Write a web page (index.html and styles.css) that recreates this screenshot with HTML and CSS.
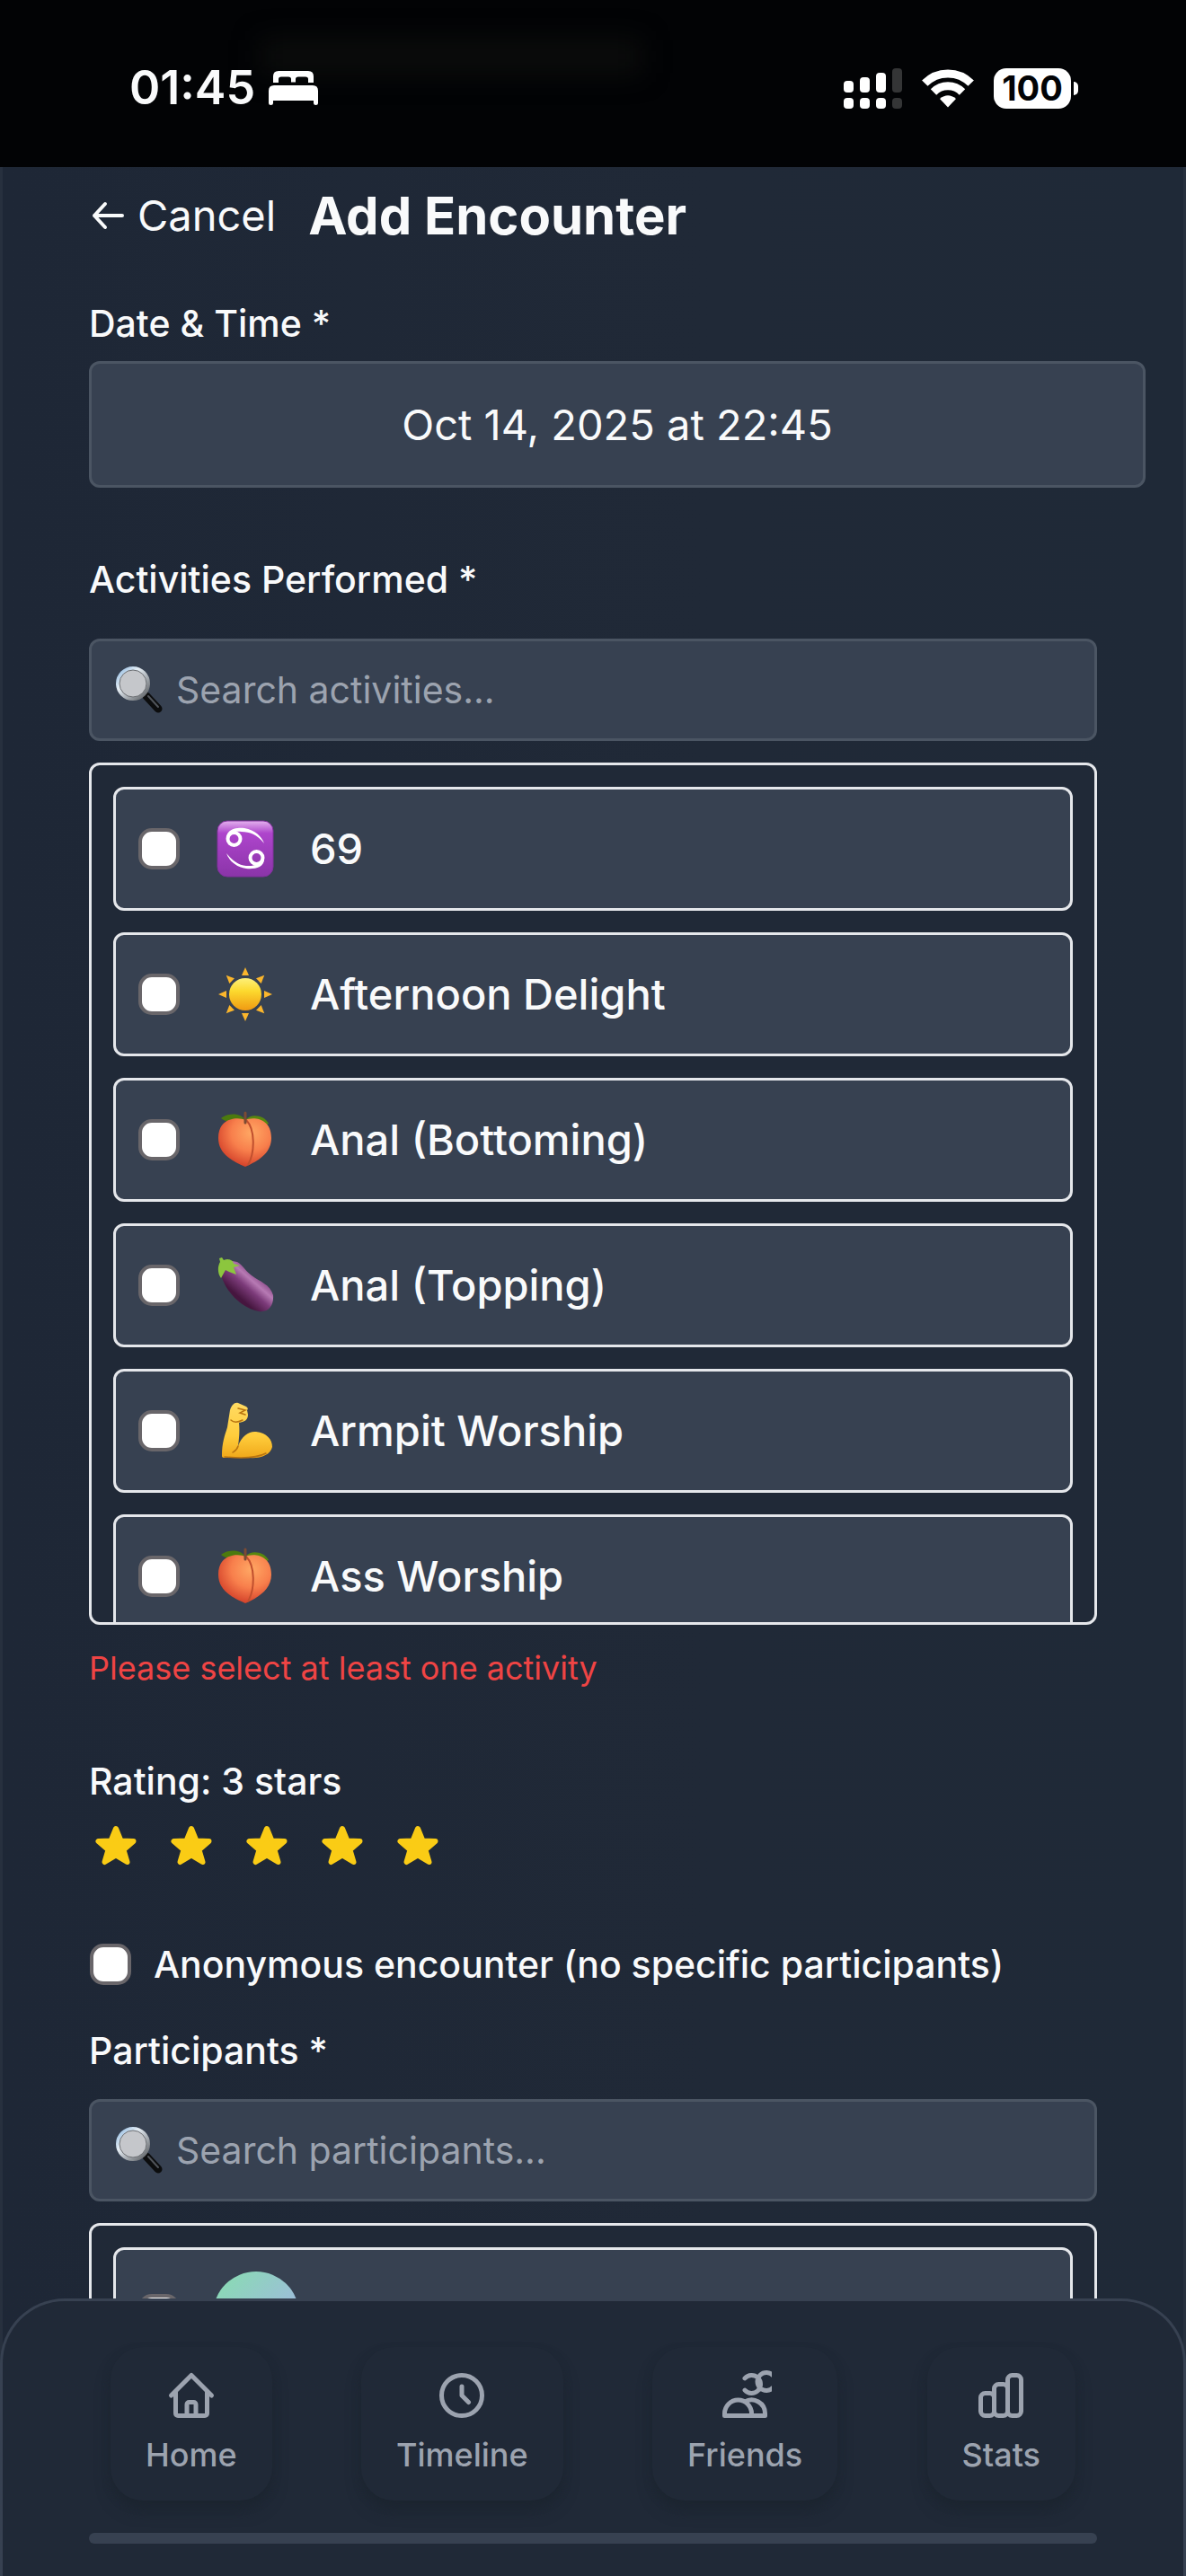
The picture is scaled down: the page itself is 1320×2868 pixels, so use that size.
FILE: index.html
```html
<!DOCTYPE html>
<html lang="en">
<head>
<meta charset="utf-8">
<meta name="viewport" content="width=device-width, initial-scale=1">
<title>Add Encounter</title>
<link rel="stylesheet" href="styles.css">
</head>
<body>
<svg class="defs" width="0" height="0" aria-hidden="true">
  <defs>
    <linearGradient id="g-purple" x1="0" y1="0" x2="0" y2="1"><stop offset="0" stop-color="#e3b1ee"/><stop offset=".22" stop-color="#ae45cc"/><stop offset="1" stop-color="#8a34a8"/></linearGradient>
    <linearGradient id="g-sun" x1="0" y1="0" x2="0" y2="1"><stop offset="0" stop-color="#fdf07a"/><stop offset=".4" stop-color="#fcd92e"/><stop offset="1" stop-color="#f09a12"/></linearGradient>
    <radialGradient id="g-peach" cx=".62" cy=".3" r=".75"><stop offset="0" stop-color="#ffa864"/><stop offset=".5" stop-color="#f87f4c"/><stop offset="1" stop-color="#cf3a26"/></radialGradient>
    <linearGradient id="g-egg" x1=".15" y1=".8" x2=".7" y2=".2"><stop offset=".25" stop-color="#46163f"/><stop offset=".55" stop-color="#7c3b7a"/><stop offset=".75" stop-color="#b77ab4"/><stop offset="1" stop-color="#7c3b7a"/></linearGradient>
    <linearGradient id="g-arm" x1="0" y1="0" x2="0" y2="1"><stop offset="0" stop-color="#ffda62"/><stop offset=".6" stop-color="#ffcd3c"/><stop offset="1" stop-color="#f0a81a"/></linearGradient>
    <linearGradient id="g-rim" x1="0" y1="0" x2="1" y2="1"><stop offset="0" stop-color="#8fb9e0"/><stop offset=".35" stop-color="#e6eef5"/><stop offset="1" stop-color="#55585c"/></linearGradient>
    <symbol id="magnifier" viewBox="0 0 52 52">
      <path d="M34 33L47 47" stroke="#0c0d0e" stroke-width="9" stroke-linecap="round"/>
      <path d="M36 33L47 45" stroke="#50545a" stroke-width="2" stroke-linecap="round"/>
      <circle cx="19" cy="19" r="17" fill="#c5c7cb" stroke="url(#g-rim)" stroke-width="4"/>
      <circle cx="19" cy="19" r="15" fill="none" stroke="#6d7074" stroke-width="1"/>
    </symbol>
    <symbol id="peach" viewBox="0 0 64 64">
      <path d="M31 9C26 2 12 2 5 8c6 5 17 7 26 4z" fill="#4c7a0e"/>
      <path d="M33 9c6-7 21-4 25 5-8 5-19 3-25-1z" fill="#58870f"/>
      <path d="M32 10C24 6 2 7 2 30c0 17 14 25 30 32 16-7 29-16 29-32C61 7 40 6 32 10z" fill="url(#g-peach)"/>
      <path d="M33 10c10 10 10 36 2 50" fill="none" stroke="#c04f2e" stroke-width="2"/>
      <path d="M32 13V2" stroke="#7c4b33" stroke-width="3" stroke-linecap="round"/>
    </symbol>
  </defs>
</svg>

<div class="status">
  <span class="status-glow"></span>
  <div class="status-left">
    <span class="clock">01:45</span>
    <svg class="bed" viewBox="0 0 55 38" fill="#fff" aria-hidden="true">
      <path d="M5 13V6Q5 0 11 0H44Q50 0 50 6V13H44V9Q44 6.500 41 6.500H33Q30 6.500 30 9V12.500H25V9Q25 6.500 22 6.500H14Q11 6.500 11 9V13z"/>
      <path d="M0 36V22Q0 16 6 16H49Q55 16 55 22V36Q55 38 52.500 38T50 36V33H5V36Q5 38 2.500 38T0 36z"/>
    </svg>
  </div>
  <div class="status-right">
    <svg class="signal" viewBox="0 0 65 45" aria-hidden="true">
      <g fill="#fff"><rect y="14" width="11" height="13" rx="4"/><rect x="18" y="10" width="11" height="17" rx="4"/><rect x="36" y="5" width="11" height="22" rx="4"/><rect y="33" width="11" height="12" rx="4"/><rect x="18" y="33" width="11" height="12" rx="4"/><rect x="36" y="33" width="11" height="12" rx="4"/></g>
      <g fill="#343536"><rect x="54" width="11" height="27" rx="4"/><rect x="54" y="33" width="11" height="12" rx="4"/></g>
    </svg>
    <svg class="wifi" viewBox="0 0 58 43" fill="none" stroke="#fff" aria-hidden="true">
      <path d="M3.300 15.700A36 36 0 0 1 54.700 15.700" stroke-width="9"/>
      <path d="M13 25.500A22.500 22.500 0 0 1 45 25.500" stroke-width="9"/>
      <path d="M20 33Q29 25.500 38 33L29 42.500z" fill="#fff" stroke="none"/>
    </svg>
    <div class="battery"><span class="battery-level">100</span><span class="battery-tip"></span></div>
  </div>
</div>

<main class="screen">
  <header class="header">
    <button class="cancel" type="button">
      <svg class="arrow" viewBox="0 0 42 42" fill="none" stroke="currentColor" stroke-width="4" stroke-linecap="round" stroke-linejoin="round" aria-hidden="true"><path d="M37 21H6M18 8L6 21L18 34"/></svg>
      Cancel
    </button>
    <h1 class="title">Add Encounter</h1>
  </header>

  <form class="form">
    <div class="group">
      <label class="label" for="when">Date &amp; Time *</label>
      <input class="when" id="when" type="text" value="Oct 14, 2025 at 22:45">
    </div>

    <div class="group group-wide">
      <label class="label" for="find-activity">Activities Performed *</label>
      <div class="picker">
        <div class="search">
          <svg class="search-icon" aria-hidden="true"><use href="#magnifier"/></svg>
          <input class="search-input" id="find-activity" type="text" placeholder="Search activities...">
        </div>
        <div class="list">
          <label class="item"><input class="check" type="checkbox">
            <span class="pic"><svg class="emoji" viewBox="0 0 64 64" aria-hidden="true"><rect x="1" y="1" width="62" height="62" rx="11" fill="url(#g-purple)" stroke="#81319d" stroke-width="1"/><g fill="none" stroke="#fff" stroke-width="4"><circle cx="19.500" cy="21" r="7"/><circle cx="44.500" cy="42" r="7"/></g><path d="M11 21C10 10 23 8 31 9C43 11 50 18 53 26C45 16 37 13 28 13C21 12 15 14 14 21zM53 42C54 53 42 55 33 54C21 52 14 45 11 37C19 47 27 51 36 51C43 51 49 49 50 42z" fill="#fff"/></svg></span>
            <span class="name">69</span></label>
          <label class="item"><input class="check" type="checkbox">
            <span class="pic"><svg class="emoji" viewBox="0 0 64 64" aria-hidden="true"><g fill="#fbb62c"><path id="ray" d="M28 11L32 2L36 11z"/><use href="#ray" transform="rotate(45 32 32)"/><use href="#ray" transform="rotate(90 32 32)"/><use href="#ray" transform="rotate(135 32 32)"/><use href="#ray" transform="rotate(180 32 32)"/><use href="#ray" transform="rotate(225 32 32)"/><use href="#ray" transform="rotate(270 32 32)"/><use href="#ray" transform="rotate(315 32 32)"/></g><circle cx="32" cy="32" r="18" fill="url(#g-sun)"/></svg></span>
            <span class="name">Afternoon Delight</span></label>
          <label class="item"><input class="check" type="checkbox">
            <span class="pic"><svg class="emoji" aria-hidden="true"><use href="#peach"/></svg></span>
            <span class="name">Anal (Bottoming)</span></label>
          <label class="item"><input class="check" type="checkbox">
            <span class="pic"><svg class="emoji" viewBox="0 0 64 64" aria-hidden="true"><path d="M4 11C4 33 25 57 47 61C58 63 64 54 63 43C60 31 48 28 39 21C31 15 30 10 23 6C14 4 5 5 4 11z" fill="url(#g-egg)"/><path d="M3 2L6 1L8 4C14 1 19 5 19 8L26 10L19 12L22 20L14 17L10 15L5 24C1 19 1 11 4 6z" fill="#8cc63e"/></svg></span>
            <span class="name">Anal (Topping)</span></label>
          <label class="item"><input class="check" type="checkbox">
            <span class="pic"><svg class="emoji" viewBox="0 0 64 64" aria-hidden="true"><path d="M6 60C6 45 9 38 12 28L15 9C17 3 20 0 24 1L33 5Q36 7 34 9L35 14C35 20 31 22 25 23C26 33 25 41 24 49C28 37 37 32 44 33C56 34 62 42 62 50C60 59 49 63 36 62L9 62Q6 62 6 60z" fill="url(#g-arm)"/><path d="M24 49C23 53 21 54 18 56M16 20C20 24 25 22 29 20M24 7L32 9L26 12L32 14M9 61Q42 64 55 57" fill="none" stroke="#b97410" stroke-width="1.500" stroke-linecap="round"/></svg></span>
            <span class="name">Armpit Worship</span></label>
          <label class="item"><input class="check" type="checkbox">
            <span class="pic"><svg class="emoji" aria-hidden="true"><use href="#peach"/></svg></span>
            <span class="name">Ass Worship</span></label>
        </div>
        <p class="error">Please select at least one activity</p>
      </div>
    </div>

    <div class="group">
      <span class="label" id="rating-label">Rating: 3 stars</span>
      <div class="stars" role="group" aria-labelledby="rating-label">
        <button class="star" type="button" aria-label="1 star"><svg class="star-icon" viewBox="0 0 48 48"><path id="star-shape" d="M24 5L29.500 18.500L43.500 19L32.500 28.500L36.500 42L24 34.500L11.500 42L15.500 28.500L4.500 19L18.500 18.500z" fill="#facc15" stroke="#facc15" stroke-width="6" stroke-linejoin="round"/></svg></button>
        <button class="star" type="button" aria-label="2 stars"><svg class="star-icon" viewBox="0 0 48 48"><use href="#star-shape"/></svg></button>
        <button class="star" type="button" aria-label="3 stars"><svg class="star-icon" viewBox="0 0 48 48"><use href="#star-shape"/></svg></button>
        <button class="star" type="button" aria-label="4 stars"><svg class="star-icon" viewBox="0 0 48 48"><use href="#star-shape"/></svg></button>
        <button class="star" type="button" aria-label="5 stars"><svg class="star-icon" viewBox="0 0 48 48"><use href="#star-shape"/></svg></button>
      </div>
    </div>

    <div class="group">
      <label class="anonymous"><input class="check" type="checkbox">Anonymous encounter (no specific participants)</label>
      <div class="participants">
        <label class="label" for="find-person">Participants *</label>
        <div class="picker">
          <div class="search">
            <svg class="search-icon" aria-hidden="true"><use href="#magnifier"/></svg>
            <input class="search-input" id="find-person" type="text" placeholder="Search participants...">
          </div>
          <div class="list">
            <label class="item"><input class="check" type="checkbox" aria-label="Participant"><span class="avatar"></span></label>
          </div>
        </div>
      </div>
    </div>
  </form>
</main>

<nav class="nav">
  <div class="tabs">
    <a class="tab" href="#home"><svg class="tab-icon" viewBox="0 0 24 24"><path d="M3 12l2-2m0 0l7-7 7 7M5 10v10a1 1 0 001 1h12a1 1 0 001-1V10m0 0l2 2M10 21v-5a1 1 0 011-1h2a1 1 0 011 1v5"/></svg>Home</a>
    <a class="tab" href="#timeline"><svg class="tab-icon" viewBox="0 0 24 24"><path d="M12 8v4l3 3m6-3a9 9 0 11-18 0 9 9 0 0118 0z"/></svg>Timeline</a>
    <a class="tab" href="#friends"><svg class="tab-icon" viewBox="0 0 24 24"><path d="M12 4.354a4 4 0 110 5.292M15 21H3v-1a6 6 0 0112 0v1zm0 0h6v-1a6 6 0 00-9-5.197M24.600 3.154a4 4 0 100 5.292"/></svg>Friends</a>
    <a class="tab" href="#stats"><svg class="tab-icon" viewBox="0 0 24 24"><path d="M9 19v-6a2 2 0 00-2-2H5a2 2 0 00-2 2v6a2 2 0 002 2h2a2 2 0 002-2zm0 0V9a2 2 0 012-2h2a2 2 0 012 2v10m-6 0a2 2 0 002 2h2a2 2 0 002-2m0 0V5a2 2 0 012-2h2a2 2 0 012 2v14a2 2 0 01-2 2h-2a2 2 0 01-2-2z"/></svg>Stats</a>
  </div>
  <div class="track"></div>
</nav>
</body>
</html>
```
FILE: styles.css
```css
* { box-sizing: border-box; }

body {
  margin: 0;
  height: 100vh;
  display: flex;
  flex-direction: column;
  overflow: hidden;
  background: #1f2937;
  color: #f9fafb;
  font-family: Inter, "Liberation Sans", sans-serif;
  font-size: 41px;
  line-height: 60px;
}

button, input { font: inherit; color: inherit; }
button { background: none; border: 0; padding: 0; }
.defs { position: absolute; }

/* Phone status bar */
.status {
  position: relative;
  flex: none;
  display: flex;
  justify-content: space-between;
  align-items: center;
  padding: 68px 120px 58px 144px;
  background: #020305;
}
.status-glow {
  position: absolute;
  left: 22%;
  top: 45px;
  width: 32%;
  height: 36px;
  background: #0c0d0c;
  filter: blur(15px);
}
.status-left, .status-right { position: relative; display: flex; align-items: center; }
.status-left { gap: 15px; }
.clock { font-size: 52px; font-weight: 600; }
.bed { width: 55px; height: 38px; }
.status-right { gap: 22px; }
.signal { width: 65px; height: 45px; }
.wifi { width: 58px; height: 43px; }
.battery { display: flex; align-items: center; gap: 3px; }
.battery-level {
  width: 86px;
  border-radius: 14px;
  background: #fff;
  color: #020305;
  font-size: 38px;
  font-weight: 700;
  line-height: 45px;
  text-align: center;
}
.battery-tip { width: 5px; height: 15px; background: #fff; border-radius: 0 5px 5px 0; }

/* Form screen */
.screen {
  flex: 1;
  min-height: 0;
  overflow: hidden;
  padding: 18px 96px 0;
  border: solid #27303e;
  border-width: 0 3px;
  background: linear-gradient(90deg, #1e2736, #202937 60%, #1f2937);
}
.header { display: flex; align-items: center; gap: 36px; margin-bottom: 54px; line-height: 72px; }
.cancel { display: flex; align-items: center; gap: 12px; font-size: 47px; }
.arrow { width: 42px; height: 42px; }
.title { margin: 0; font-size: 58px; font-weight: 700; }

.form { display: flex; flex-direction: column; gap: 72px; }
.group { display: flex; flex-direction: column; gap: 12px; }
.group-wide { gap: 36px; }
.label { font-weight: 500; }
.when {
  width: calc(100% + 54px);
  padding: 33px 36px;
  border: 3px solid #4b5563;
  border-radius: 12px;
  background: #374151;
  font-size: 47px;
  line-height: 69px;
  height: 141px;
  text-align: center;
}

.picker { display: flex; flex-direction: column; gap: 24px; }
.search {
  display: flex;
  align-items: center;
  gap: 15px;
  padding: 24px 27px;
  border: 3px solid #4b5563;
  border-radius: 12px;
  background: #374151;
}
.search-icon { width: 52px; height: 52px; }
.search-input { flex: 1; min-width: 0; height: 60px; padding: 0; border: 0; background: none; }
.search-input::placeholder { color: #9ca3af; opacity: 1; }

.list {
  display: flex;
  flex-direction: column;
  gap: 24px;
  max-height: 960px;
  overflow: hidden;
  padding: 24px;
  border: 3px solid #e5e7eb;
  border-radius: 12px;
  background: #202937;
}
.item {
  flex: none;
  display: flex;
  align-items: center;
  gap: 36px;
  padding: 24px;
  border: 3px solid #e5e7eb;
  border-radius: 12px;
  background: #374151;
}
.check {
  appearance: none;
  flex: none;
  width: 46px;
  height: 46px;
  margin: 1px;
  border: 4px solid #69666a;
  border-radius: 15px;
  background: #fff;
}
.pic { display: flex; justify-content: center; width: 72px; padding: 10px 0; }
.emoji { width: 64px; height: 64px; }
.name { font-size: 47px; font-weight: 500; }
.avatar { width: 96px; height: 96px; border-radius: 50%; background: linear-gradient(135deg, #86dfae, #a9acf0); }

.error { margin: 0; color: #ef4444; font-size: 36px; line-height: 48px; }

.stars { display: flex; gap: 36px; padding: 6px; }
.star { display: flex; }
.star-icon { width: 48px; height: 48px; }

.anonymous { display: flex; align-items: center; gap: 24px; font-weight: 500; }
.participants { display: flex; flex-direction: column; gap: 24px; padding-top: 24px; }

/* Bottom navigation, laid over the scrolling form */
.nav {
  position: fixed;
  left: 0;
  right: 0;
  bottom: 0;
  padding: 51px 96px 36px;
  border: 3px solid #374151;
  border-bottom: 0;
  border-radius: 72px 72px 0 0;
  background: #202937;
}
.tabs { display: flex; justify-content: space-between; padding: 0 24px; }
.tab {
  display: flex;
  flex-direction: column;
  align-items: center;
  gap: 9px;
  padding: 24px 39px;
  border-radius: 36px;
  box-shadow: 0 12px 18px -3px #1c2530, 0 6px 12px -3px #1c2530;
  background: #202937;
  color: #9ca3af;
  font-size: 36px;
  font-weight: 500;
  line-height: 54px;
  text-decoration: none;
}
.tab-icon { width: 60px; height: 60px; fill: none; stroke: currentColor; stroke-width: 2; stroke-linecap: round; stroke-linejoin: round; }
.track { height: 12px; margin-top: 36px; border-radius: 6px; background: #374151; }
```
